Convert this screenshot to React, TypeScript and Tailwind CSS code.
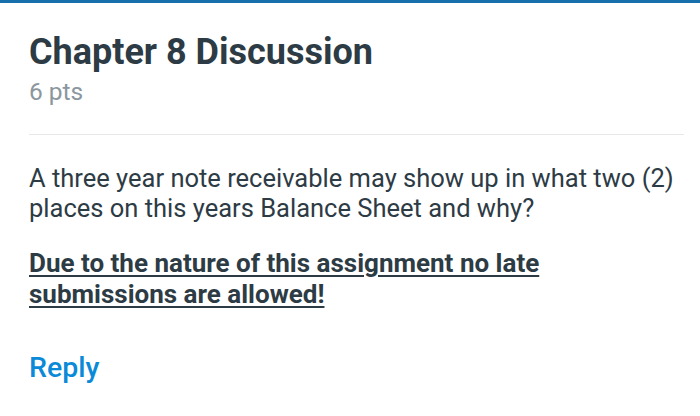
export default function App() {
  return (
    <div className="w-[700px] h-[416px] bg-white overflow-hidden font-['Roboto','Noto_Sans',sans-serif] text-[#2d3b45]">
      <div className="h-[3px] bg-[#1770ab]" />
      <div className="pl-[29px] pr-[16px]">
        <div className="pt-[27px] pb-[28px] border-b border-[#e5e7e9]">
          <h1 className="text-[36px] leading-[44px] font-bold">Chapter 8 Discussion</h1>
          <div className="mt-[4px] text-[24.5px] leading-[28px] text-[#8b969e]">6 pts</div>
        </div>
        <p className="mt-[28px] text-[25.5px] leading-[30px]">
          A three year note receivable may show up in what two (2)
          <br />
          places on this years Balance Sheet and why?
        </p>
        <p className="mt-[25px] text-[26px] leading-[31px] font-bold underline underline-offset-[3px] decoration-[1.5px]">
          Due to the nature of this assignment no late
          <br />
          submissions are allowed!
        </p>
        <div className="mt-[41px] text-[28.5px] leading-[34px] text-[#0b8ad8] font-medium">Reply</div>
      </div>
    </div>
  )
}
